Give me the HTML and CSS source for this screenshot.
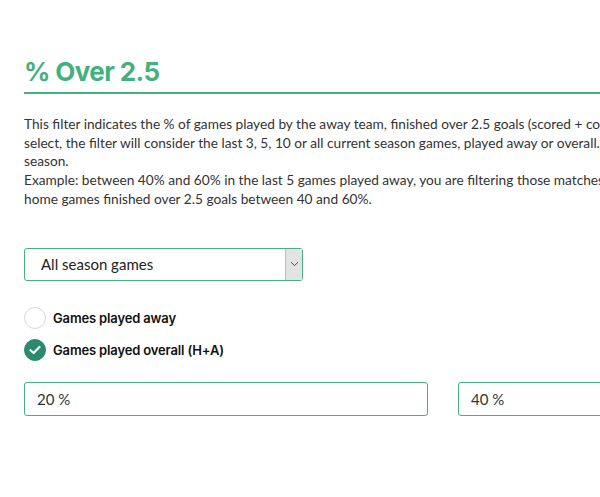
FILE: index.html
```html
<!DOCTYPE html>
<html lang="en">
<head>
<meta charset="utf-8">
<title>% Over 2.5</title>
<link rel="stylesheet" href="styles.css">
</head>
<body>
<div class="page">
  <h2 class="title">% Over 2.5</h2>
  <p class="desc">This filter indicates the % of games played by the away team, finished over 2.5 goals (scored + conceded). Depending on what you<br>select, the filter will consider the last 3, 5, 10 or all current season games, played away or overall. All means the whole current<br>season.<br>Example: between 40% and 60% in the last 5 games played away, you are filtering those matches where the away team had its last 5<br>home games finished over 2.5 goals between 40 and 60%.</p>

  <div class="select">
    <span class="select-value">All season games</span>
    <span class="select-btn">
      <svg width="9" height="6" viewBox="0 0 9 6"><path d="M1 1.2 L4.5 4.6 L8 1.2" fill="none" stroke="#555" stroke-width="1"/></svg>
    </span>
  </div>

  <div class="radios">
    <label class="radio">
      <span class="dot"></span>
      <span class="radio-label">Games played away</span>
    </label>
    <label class="radio">
      <span class="dot checked">
        <svg width="12" height="10" viewBox="0 0 12 10"><path d="M1.5 5.2 L4.6 8 L10.5 2" fill="none" stroke="#fff" stroke-width="2.2" stroke-linecap="round" stroke-linejoin="round"/></svg>
      </span>
      <span class="radio-label">Games played overall (H+A)</span>
    </label>
  </div>

  <div class="inputs">
    <div class="field">20 %</div>
    <div class="field">40 %</div>
  </div>
</div>
</body>
</html>
```

FILE: styles.css
```css
html, body {
  margin: 0;
  padding: 0;
  background: #fff;
  overflow: hidden;
}

body {
  font-family: Lato, "Open Sans", sans-serif;
  color: #333;
}

.page {
  width: 900px;
  padding: 57px 0 0 24px;
}

.title {
  margin: 0;
  font-family: Inter, "Liberation Sans", sans-serif;
  font-weight: 700;
  font-size: 26px;
  line-height: 30px;
  letter-spacing: -0.6px;
  color: #43b07d;
  padding-bottom: 5px;
  border-bottom: 2px solid #43b07d;
}

.desc {
  margin: 21px 0 0;
  font-size: 13.7px;
  line-height: 18.7px;
  color: #333;
  white-space: nowrap;
}

.select {
  margin-top: 39px;
  width: 277px;
  height: 31px;
  border: 1px solid #43b07d;
  border-radius: 3px;
  display: flex;
  align-items: stretch;
}

.select-value {
  flex: 1;
  display: flex;
  align-items: center;
  padding-left: 16px;
  font-size: 15px;
  color: #222;
}

.select-btn {
  width: 16px;
  background: #e3e3e3;
  border-left: 1px solid #bdbdbd;
  display: flex;
  align-items: center;
  justify-content: center;
}

.radios {
  margin-top: 26px;
  display: flex;
  flex-direction: column;
  gap: 10px;
}

.radio {
  display: flex;
  align-items: center;
  gap: 7px;
}

.dot {
  width: 20px;
  height: 20px;
  border: 1px solid #d9d9d9;
  border-radius: 50%;
  display: flex;
  align-items: center;
  justify-content: center;
}

.dot.checked {
  background: #2b8a6d;
  border-color: #2b8a6d;
}

.radio-label {
  font-family: Inter, "Liberation Sans", sans-serif;
  font-weight: 600;
  font-size: 13px;
  letter-spacing: -0.15px;
  color: #111;
}

.inputs {
  margin-top: 21px;
  display: grid;
  grid-template-columns: 404px 404px;
  column-gap: 30px;
}

.field {
  height: 32px;
  border: 1px solid #43b07d;
  border-radius: 3px;
  display: flex;
  align-items: center;
  padding-left: 12px;
  font-size: 15px;
  color: #333;
}
```
